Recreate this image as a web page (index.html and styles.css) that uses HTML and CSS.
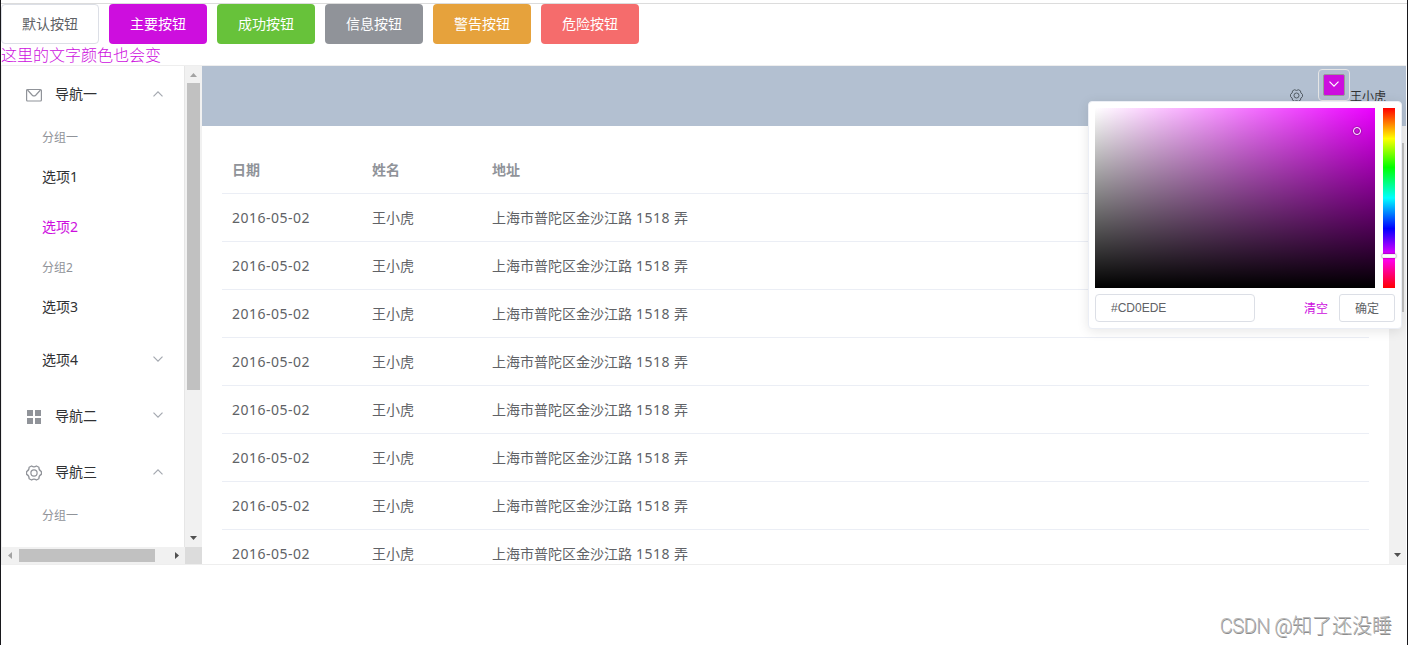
FILE: index.html
```html
<!DOCTYPE html>
<html lang="zh-CN">
<head>
<meta charset="utf-8">
<title>主题颜色</title>
<link rel="stylesheet" href="styles.css">
</head>
<body>
<svg class="sprite" aria-hidden="true">
  <symbol id="gear" viewBox="0 0 16 16"><path d="M15.400 6.600Q12.600 5.300 12.900 2.300L10.400 .9Q8 2.700 5.600 .9L3.100 2.300Q3.400 5.300 .6 6.600V9.400Q3.400 10.700 3.100 13.700L5.600 15.100Q8 13.300 10.400 15.100L12.900 13.700Q12.600 10.700 15.400 9.400Z" fill="none" stroke="currentColor" stroke-width="1.200" stroke-linejoin="round"/><circle cx="8" cy="8" r="3.100" fill="none" stroke="currentColor" stroke-width="1.200"/></symbol>
  <symbol id="chev" viewBox="0 0 12 12"><path d="M1.500 3.700 6 8.200l4.500-4.500" fill="none" stroke="currentColor" stroke-width="1.200"/></symbol>
</svg>
<div class="page">
  <div class="buttons">
    <button class="btn">默认按钮</button>
    <button class="btn primary">主要按钮</button>
    <button class="btn success">成功按钮</button>
    <button class="btn info">信息按钮</button>
    <button class="btn warning">警告按钮</button>
    <button class="btn danger">危险按钮</button>
  </div>
  <div class="tip">这里的文字颜色也会变</div>
  <div class="container">
    <aside class="aside">
      <div class="aside-top">
        <nav class="menu">
          <div class="title"><svg class="icon mail" viewBox="0 0 16 16"><rect x=".6" y="2.500" width="14.800" height="11.500" rx="1" fill="none" stroke="currentColor" stroke-width="1.200"/><path d="M1.500 3 6.300 8.200q1.700 1.400 3.400 0L14.500 3" fill="none" stroke="currentColor" stroke-width="1.200"/></svg><span>导航一</span><svg class="arrow up"><use href="#chev"/></svg></div>
          <div class="group">分组一</div>
          <div class="item">选项<span class="num">1</span></div>
          <div class="item active">选项<span class="num">2</span></div>
          <div class="group">分组<span class="num">2</span></div>
          <div class="item">选项<span class="num">3</span></div>
          <div class="title sub"><span>选项<span class="num">4</span></span><svg class="arrow"><use href="#chev"/></svg></div>
          <div class="title"><svg class="icon" viewBox="0 0 16 16"><path d="M1 2h6v6H1zM9 2h6v6H9zM1 10h6v6H1zM9 10h6v6H9z" fill="currentColor"/></svg><span>导航二</span><svg class="arrow"><use href="#chev"/></svg></div>
          <div class="title"><svg class="icon gear"><use href="#gear"/></svg><span>导航三</span><svg class="arrow up"><use href="#chev"/></svg></div>
          <div class="group">分组一</div>
        </nav>
        <div class="vbar">
          <svg class="tri" viewBox="0 0 17 17"><path d="M5 11h7L8.500 7z" fill="#a3a3a3"/></svg>
          <div class="track"><div class="thumb"></div></div>
          <svg class="tri" viewBox="0 0 17 17"><path d="M5 6h7l-3.500 4z" fill="#505050"/></svg>
        </div>
      </div>
      <div class="aside-bottom">
        <div class="hbar">
          <svg class="tri" viewBox="0 0 17 17"><path d="M10 5v7L6 8.500z" fill="#a3a3a3"/></svg>
          <div class="hthumb"></div>
          <svg class="tri end" viewBox="0 0 17 17"><path d="M7 5v7l4-3.500z" fill="#505050"/></svg>
        </div>
        <div class="corner"></div>
      </div>
    </aside>
    <section class="right">
      <header class="header">
        <svg class="cog"><use href="#gear"/></svg>
        <div class="trigger"><div class="swatch"><svg><use href="#chev"/></svg></div></div>
        <span class="user">王小虎</span>
      </header>
      <div class="main">
        <div class="content">
          <div class="row head"><div>日期</div><div>姓名</div><div>地址</div></div>
          <div class="row"><div class="date">2016-05-02</div><div>王小虎</div><div>上海市普陀区金沙江路<span class="no"> 1518 </span>弄</div></div>
          <div class="row"><div class="date">2016-05-02</div><div>王小虎</div><div>上海市普陀区金沙江路<span class="no"> 1518 </span>弄</div></div>
          <div class="row"><div class="date">2016-05-02</div><div>王小虎</div><div>上海市普陀区金沙江路<span class="no"> 1518 </span>弄</div></div>
          <div class="row"><div class="date">2016-05-02</div><div>王小虎</div><div>上海市普陀区金沙江路<span class="no"> 1518 </span>弄</div></div>
          <div class="row"><div class="date">2016-05-02</div><div>王小虎</div><div>上海市普陀区金沙江路<span class="no"> 1518 </span>弄</div></div>
          <div class="row"><div class="date">2016-05-02</div><div>王小虎</div><div>上海市普陀区金沙江路<span class="no"> 1518 </span>弄</div></div>
          <div class="row"><div class="date">2016-05-02</div><div>王小虎</div><div>上海市普陀区金沙江路<span class="no"> 1518 </span>弄</div></div>
          <div class="row"><div class="date">2016-05-02</div><div>王小虎</div><div>上海市普陀区金沙江路<span class="no"> 1518 </span>弄</div></div>
        </div>
        <div class="vbar">
          <svg class="tri" viewBox="0 0 17 17"><path d="M5 11h7L8.500 7z" fill="#505050"/></svg>
          <div class="track"><div class="thumb short"></div></div>
          <svg class="tri" viewBox="0 0 17 17"><path d="M5 6h7l-3.500 4z" fill="#505050"/></svg>
        </div>
      </div>
    </section>
  </div>
  <footer class="mark"><span class="latin">CSDN @</span>知了还没睡</footer>
</div>
<div class="picker">
  <div class="panels">
    <div class="sat"><div class="cursor"></div></div>
    <div class="hue"><div class="hue-thumb"></div></div>
  </div>
  <div class="actions">
    <div class="value">#CD0EDE</div>
    <span class="clear">清空</span>
    <button class="ok">确定</button>
  </div>
</div>
</body>
</html>
```
FILE: styles.css
```css
* { box-sizing: border-box; }
body {
  margin: 0;
  height: 645px;
  overflow: hidden;
  position: relative;
  background: #fff;
  color: #303133;
  font-family: "Noto Sans", "Noto Sans CJK SC", sans-serif;
  font-size: 14px;
}
.sprite { position: absolute; width: 0; height: 0; }
.page {
  height: 645px;
  border-left: 1px solid #18181c;
  border-right: 1px solid #18181c;
  padding-top: 3px;
  display: flex;
  flex-direction: column;
}
.buttons { display: flex; gap: 10px; height: 41px; border-top: 1px solid #dcdcdc; }
.btn {
  width: 98px;
  height: 40px;
  padding: 0 0 2px;
  border: 1px solid #dcdfe6;
  border-radius: 4px;
  background: #fff;
  color: #606266;
  font: 14px/1 "Noto Sans CJK SC", sans-serif;
}
.primary, .success, .info, .warning, .danger { color: #fff; border: 0; }
.primary { background: #cd0ede; }
.success { background: #67c23a; }
.info { background: #909399; }
.warning { background: #e6a23c; }
.danger { background: #f56c6c; }
.tip { height: 21px; line-height: 22px; font-size: 16px; font-weight: 300; color: #cd0ede; white-space: nowrap; }
.container { height: 500px; border: 1px solid #eee; border-right: 0; display: flex; margin-right: 1px; }
.aside { width: 200px; flex: none; display: flex; flex-direction: column; }
.aside-top { height: 481px; display: flex; overflow: hidden; }
.menu { width: 183px; flex: none; border-right: 1px solid #e6e6e6; }
.title { height: 56px; line-height: 56px; display: flex; align-items: center; padding: 0 20px 0 24px; }
.title > span { height: 56px; }
.title.sub { padding-left: 40px; }
.icon { width: 16px; height: 16px; color: #909399; margin-right: 13px; }
.gear, .mail { transform: translateY(1px); }
.arrow { width: 12px; height: 12px; margin-left: auto; color: #a4a8b0; transform: translateY(-1px); }
.arrow.up { transform: rotate(180deg); }
.group { height: 30px; line-height: 32px; padding-left: 40px; font-size: 12px; color: #909399; }
.item { height: 50px; line-height: 50px; padding-left: 40px; }
.active { color: #cd0ede; }
.vbar { width: 17px; flex: none; background: #f1f1f1; display: flex; flex-direction: column; }
.tri { width: 17px; height: 17px; flex: none; }
.track { flex: 1; padding: 0 2px; }
.thumb { height: 307px; background: #c1c1c1; }
.short { height: 169px; }
.aside-bottom { display: flex; height: 17px; }
.hbar { width: 183px; background: #f1f1f1; display: flex; align-items: center; }
.hthumb { width: 136px; height: 13px; background: #c1c1c1; }
.end { margin-left: auto; }
.corner { width: 17px; background: #dcdcdc; }
.right { flex: 1; display: flex; flex-direction: column; min-width: 0; }
.header {
  height: 60px;
  flex: none;
  background: #b3c0d1;
  display: flex;
  justify-content: flex-end;
  align-items: flex-start;
  padding: 3px 20px 0 0;
  font-size: 12px;
}
.cog { width: 13px; height: 13px; margin: 20px 15px 0 0; color: #505962; }
.trigger { width: 32px; height: 32px; border: 1px solid #e6e6e6; border-radius: 4px; padding: 4px; }
.swatch {
  width: 22px;
  height: 22px;
  background: #cd0ede;
  border: 1px solid #999;
  border-radius: 2px;
  display: flex;
  align-items: center;
  justify-content: center;
  color: #fff;
}
.swatch svg { width: 12px; height: 12px; transform: translateY(-1px); }
.user { margin-top: 19px; line-height: 18px; }
.main { flex: 1; min-height: 0; display: flex; }
.content { flex: 1; padding: 20px 20px 0; overflow: hidden; }
.row {
  display: grid;
  grid-template-columns: 140px 120px 1fr;
  height: 48px;
  line-height: 48px;
  border-bottom: 1px solid #ebeef5;
  color: #606266;
}
.row > div { padding-left: 10px; white-space: nowrap; }
.head { color: #909399; font-weight: 700; }
.date { letter-spacing: .48px; }
.no { letter-spacing: .45px; }
.mark {
  margin: auto 15px 6px auto;
  height: 28px;
  line-height: 28px;
  font-size: 20px;
  font-weight: 300;
  font-family: "Noto Sans CJK SC", sans-serif;
  color: #b8b8b8;
  text-shadow: .6px .6px 0 #8c8c8c;
  white-space: nowrap;
}
.latin { font-family: Roboto, sans-serif; letter-spacing: -.5px; }
.picker {
  position: absolute;
  left: 1088px;
  top: 101px;
  width: 314px;
  height: 228px;
  padding: 6px;
  background: #fff;
  border: 1px solid #ebeef5;
  border-radius: 4px;
  box-shadow: 0 2px 12px rgba(0, 0, 0, .1);
}
.panels { display: flex; gap: 8px; margin-bottom: 6px; }
.sat {
  position: relative;
  width: 280px;
  height: 180px;
  background: linear-gradient(to top, #000, transparent), linear-gradient(to right, #fff, rgba(255, 255, 255, 0)), #eb00ff;
}
.cursor {
  position: absolute;
  left: 258px;
  top: 19px;
  width: 8px;
  height: 8px;
  border: 1.500px solid #fff;
  border-radius: 50%;
  box-shadow: inset 0 0 1px 1px rgba(0, 0, 0, .3), 0 0 1px 1px rgba(0, 0, 0, .15);
}
.hue {
  position: relative;
  width: 12px;
  height: 180px;
  background: linear-gradient(to bottom, red, #ff0 17%, #0f0 33%, #0ff 50%, #00f 67%, #f0f 83%, red);
}
.hue-thumb {
  position: absolute;
  left: -1px;
  top: 146px;
  width: 14px;
  height: 4px;
  background: #fff;
  border: 1px solid #f0f0f0;
  border-radius: 1px;
  box-shadow: 0 0 2px rgba(0, 0, 0, .6);
}
.actions { display: flex; align-items: center; font-size: 12px; }
.value {
  width: 160px;
  height: 28px;
  line-height: 26px;
  border: 1px solid #dcdfe6;
  border-radius: 4px;
  padding-left: 15px;
  color: #606266;
  font-family: "Liberation Sans", Arial, sans-serif;
}
.clear { margin-left: auto; margin-right: 11px; color: #cd0ede; }
.ok {
  width: 56px;
  height: 28px;
  padding: 0;
  border: 1px solid #dcdfe6;
  border-radius: 3px;
  background: #fff;
  color: #606266;
  font: 12px/1 "Noto Sans CJK SC", sans-serif;
}
```
